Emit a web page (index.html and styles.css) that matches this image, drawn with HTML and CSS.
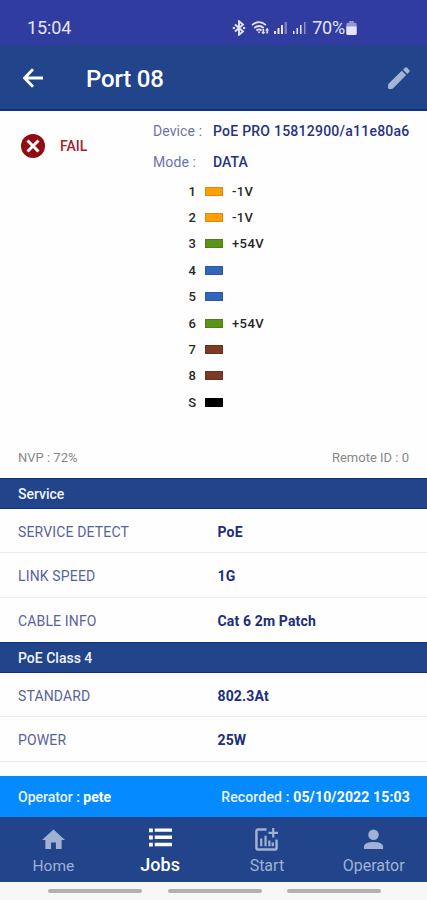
FILE: index.html
```html
<!DOCTYPE html>
<html lang="en">
<head>
<meta charset="utf-8">
<title>Port 08</title>
<link rel="stylesheet" href="styles.css">
</head>
<body>
<div class="app">
  <div class="status">
    <span class="time">15:04</span>
    <div class="indicators">
      <svg class="bluetooth" viewBox="0 0 14 16"><path d="M3 4.5l8 7-4 3.2V1.3l4 3.2-8 7M.8 8h2.2M11 8h2.200" fill="none" stroke="currentColor" stroke-width="1.9"/></svg>
      <svg class="wifi" viewBox="0 0 19 16"><g fill="none" stroke="currentColor" stroke-width="1.7"><path d="M1 5.2Q8 -1 15 5.2M3.2 8Q8 4 12.8 8M5.4 10.5Q8 8.4 10.6 10.5"/><path d="M12.3 9v4.5M16.2 8.5v5"/></g><path d="M6.5 11.6h3L8 13.5zM10.3 12h4l-2 2.3zM14.2 10.4h4l-2-2.3z" fill="currentColor"/></svg>
      <svg class="signal" viewBox="0 0 14 14"><path d="M0 10h2v3H0zM3.5 7h2v6h-2zM7 4h2v9H7z" fill="currentColor"/><path d="M10.5 1h2.5v12h-2.5z" fill="currentColor" opacity=".4"/></svg>
      <svg class="signal signal-two" viewBox="0 0 14 14"><path d="M0 10h1.5v3H0zM3.5 7H5v6H3.500zM7 4h1.500v9H7z" fill="currentColor"/><path d="M11 1h1.500v12H11z" fill="currentColor" opacity=".5"/></svg>
      <span class="percent">70%</span>
      <svg class="battery" viewBox="0 0 11 15"><path d="M3 0h5v2h1.500q1.500 0 1.500 1.500v10q0 1.500-1.500 1.500h-8Q0 15 0 13.500v-10Q0 2 1.500 2H3z" fill="currentColor" opacity=".55"/><path d="M0 6h11v7.500q0 1.500-1.500 1.500h-8Q0 15 0 13.500z" fill="currentColor"/></svg>
    </div>
  </div>
  <header class="header">
    <svg class="back" viewBox="0 0 20 20"><path d="M10 1.200L1.500 10 10 18.800M1.500 10H20" fill="none" stroke="currentColor" stroke-width="2.800"/></svg>
    <h1 class="title">Port 08</h1>
    <svg class="edit" viewBox="0 0 22 22"><path d="M0 18.500Q0 17.200 1 16.200L13.800 3.800l4.300 4.300L5.500 21Q4.500 22 3.200 22H1.200Q0 22 0 20.800zM15 2.700l1.900-1.900q1.100-1.100 2.200 0l2.100 2.100q1.100 1.100 0 2.200L19.300 7z" fill="currentColor"/></svg>
  </header>
  <main class="content">
    <section class="summary">
      <div class="result">
        <svg class="fail-icon" viewBox="0 0 24 24"><circle cx="12" cy="12" r="12" fill="#920b12"/><path d="M6.500 6.500l11 11M17.500 6.500l-11 11" stroke="#fff" stroke-width="3"/></svg>
        <span class="fail">FAIL</span>
      </div>
      <dl class="details">
        <dt>Device :</dt><dd class="device">PoE PRO 15812900/a11e80a6</dd>
        <dt>Mode :</dt><dd>DATA</dd>
      </dl>
    </section>
    <ul class="wires">
      <li><span>1</span><i class="orange"></i><b>-1V</b></li>
      <li><span>2</span><i class="orange"></i><b>-1V</b></li>
      <li><span>3</span><i class="green"></i><b>+54V</b></li>
      <li><span>4</span><i class="blue"></i></li>
      <li><span>5</span><i class="blue"></i></li>
      <li><span>6</span><i class="green"></i><b>+54V</b></li>
      <li><span>7</span><i class="brown"></i></li>
      <li><span>8</span><i class="brown"></i></li>
      <li><span>S</span><i class="black"></i></li>
    </ul>
    <div class="meta"><span>NVP : 72%</span><span>Remote ID : 0</span></div>
    <h2 class="section">Service</h2>
    <div class="row"><span>SERVICE DETECT</span><strong>PoE</strong></div>
    <div class="row"><span>LINK SPEED</span><strong>1G</strong></div>
    <div class="row last"><span>CABLE INFO</span><strong>Cat 6 2m Patch</strong></div>
    <h2 class="section">PoE Class 4</h2>
    <div class="row"><span>STANDARD</span><strong>802.3At</strong></div>
    <div class="row"><span>POWER</span><strong>25W</strong></div>
  </main>
  <div class="record"><span>Operator : <b>pete</b></span><span class="recorded">Recorded : <b>05/10/2022 15:03</b></span></div>
  <nav class="tabs">
    <a><svg viewBox="0 0 24 24"><path d="M12 1.500L0 12.500h3.500V22h6v-7h5v7h6v-9.500H24z" fill="currentColor"/></svg><span>Home</span></a>
    <a class="active"><svg viewBox="0 0 24 24"><path d="M0 2.500h4v4H0zM6 2.500h18v3.500H6zM0 10h4v4H0zM6 10h18v3.500H6zM0 17.500h4v4H0zM6 17.500h18V21H6z" fill="currentColor"/></svg><span>Jobs</span></a>
    <a><svg viewBox="0 0 24 24"><path d="M12 1.500H3.500q-2 0-2 2v17q0 2 2 2h17q2 0 2-2V12" fill="none" stroke="currentColor" stroke-width="2.600"/><path d="M6.500 11v8M11 8v11M15 13v6M18.500 15v4M19 0v10M14 5h10" fill="none" stroke="currentColor" stroke-width="2.300"/></svg><span>Start</span></a>
    <a><svg viewBox="0 0 24 24"><circle cx="12" cy="7" r="5.500" fill="currentColor"/><path d="M2 22v-2.500Q2 14.500 12 14.500t10 5V22z" fill="currentColor"/></svg><span>Operator</span></a>
  </nav>
  <div class="gestures"><i></i><i></i><i></i></div>
</div>
</body>
</html>
```
FILE: styles.css
```css
* { box-sizing: border-box; }
body { margin: 0; font-family: Roboto, "Liberation Sans", sans-serif; background: #fff; }
.app { width: 427px; height: 900px; display: flex; flex-direction: column; overflow: hidden; }
.status { height: 45px; flex: none; padding: 10px 70px 0 27px; display: flex; align-items: center; justify-content: space-between; color: #e4e5f7; background: #303c9f; }
.time { font-size: 18px; letter-spacing: -.1px; }
.indicators { display: flex; align-items: center; }
.bluetooth { width: 14px; height: 16px; margin-right: 5px; }
.wifi { width: 19px; height: 16px; margin-right: 4px; }
.signal { width: 14px; height: 14px; margin-right: 5px; }
.signal-two { margin-right: 5px; }
.percent { font-size: 18px; letter-spacing: -.2px; }
.battery { width: 11px; height: 14px; margin-left: 1px; }
.header { height: 66px; flex: none; padding: 2px 17px 0 23px; display: flex; align-items: center; color: #fff; background: #21448b; border-bottom: 2px solid #10317b; }
.back { width: 20px; height: 20px; }
.title { margin: 2px auto 0 43px; font-size: 24px; line-height: 30px; font-weight: 500; letter-spacing: -.2px; }
.edit { width: 22px; height: 22px; color: #a5b4d2; }
.content { flex: 1; overflow: hidden; background: #fefefe; }
.summary { height: 67px; display: flex; padding: 5px 0 0 21px; }
.result { width: 132px; height: 59px; display: flex; align-items: center; gap: 15px; color: #9e2431; }
.fail-icon { width: 24px; height: 24px; }
.fail { font-size: 14px; font-weight: 500; }
.details { margin: 0; display: grid; grid-template-columns: 60px 1fr; grid-template-rows: 31px 31px; line-height: 30px; font-size: 14px; letter-spacing: .1px; }
.details dt { color: #6c74a5; }
.details dd { margin: 0; color: #26347f; font-weight: 500; white-space: nowrap; }
.details .device { letter-spacing: .24px; }
.wires { list-style: none; margin: 0; padding: 0 0 0 184px; }
.wires li { height: 26.4px; display: flex; align-items: center; font-size: 13px; color: #282828; }
.wires span { width: 12px; margin-right: 9px; text-align: right; font-weight: 500; }
.wires i { width: 18px; height: 9px; margin-right: 9px; border: 1px solid #0002; }
.wires b { font-weight: 500; letter-spacing: .4px; }
.orange { background: #ff9f08; }
.green { background: #5b921b; }
.blue { background: #3266b9; }
.brown { background: #7a3a24; }
.black { background: #000; }
.meta { height: 62.400px; padding: 27px 18px 0; display: flex; justify-content: space-between; font-size: 13px; line-height: 30px; color: #888; }
.section { margin: 0; height: 31px; padding: 0 0 0 18px; font-size: 14px; line-height: 30px; font-weight: 500; color: #f2f5ff; background: #21448b; border: solid #10317b; border-width: 1px 0; }
.row { height: 44.400px; padding: 2px 0 0 18px; display: grid; grid-template-columns: 199.500px 1fr; align-items: center; font-size: 14px; letter-spacing: .15px; color: #59639b; border-bottom: 1px solid #ececee; }
.row.last { border: 0; }
.row strong { color: #202d7d; font-size: 14px; letter-spacing: .15px; font-weight: 700; }
.record { height: 41px; flex: none; padding: 0 17px 0 18px; display: flex; align-items: center; justify-content: space-between; color: #eaf6ff; background: #058aff; font-size: 14px; font-weight: 500; }
.recorded { letter-spacing: .16px; }
.record b { color: #fff; font-weight: 700; }
.tabs { height: 65px; flex: none; display: grid; grid-template-columns: repeat(4, 1fr); background: #21448b; color: #a0b1d3; }
.tabs a { display: flex; flex-direction: column; align-items: center; padding-top: 11px; }
.tabs svg { width: 23px; height: 23px; }
.tabs span { margin-top: 5px; font-size: 16px; line-height: 20px; }
.tabs a:first-child span { font-size: 15.500px; }
.tabs .active { color: #fff; padding-top: 9px; }
.tabs .active span { font-size: 18px; line-height: 22px; margin-top: 5px; font-weight: 500; }
.gestures { height: 18px; flex: none; padding: 7px 0 0 48px; display: flex; gap: 25.500px; background: #f7f7f8; }
.gestures i { width: 94px; height: 4px; border-radius: 2px; background: #b1b1b3; }
```
